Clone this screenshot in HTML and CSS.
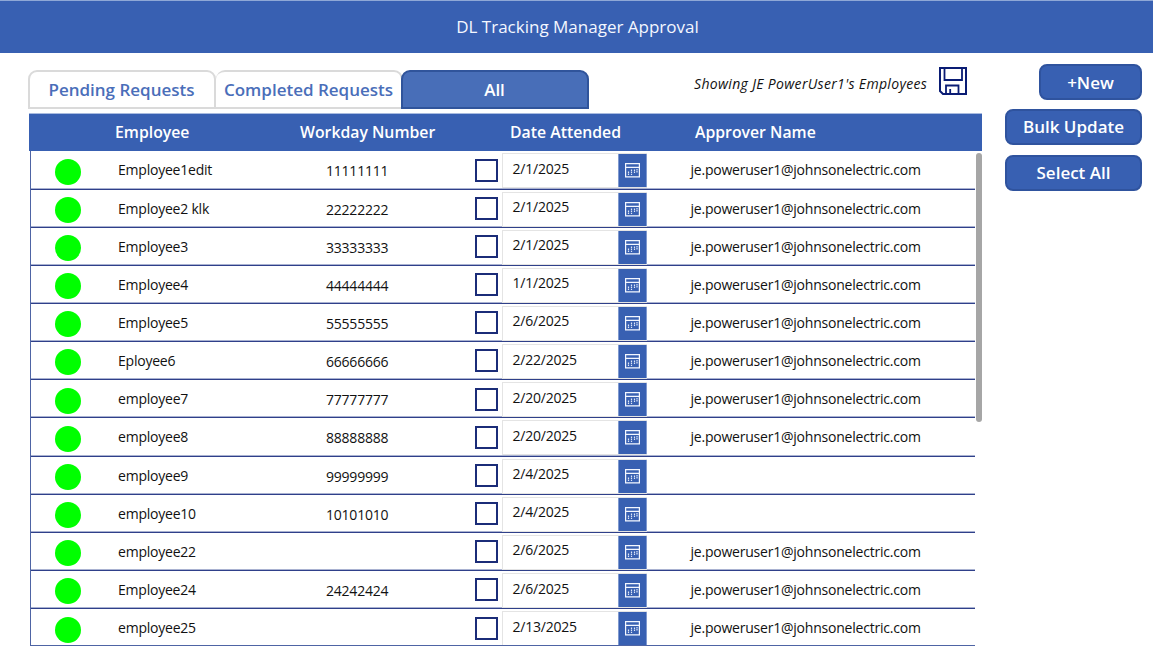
FILE: index.html
```html
<!DOCTYPE html>
<html lang="en">
<head>
<meta charset="utf-8">
<title>DL Tracking Manager Approval</title>
<link rel="stylesheet" href="styles.css">
</head>
<body>
<svg class="defs" aria-hidden="true">
  <symbol id="cal" viewBox="0 0 15 15">
    <path d="M.6 .6H14.4V13.9H.6Z M.6 4.4H14.4" fill="none" stroke="#f4f7ff" stroke-width="1.2"/>
    <path d="M3.5 8.5V12M6.5 6.5V12M9.5 6.5V10.5M12 6V10" fill="none" stroke="#dfe7f8" stroke-width="1.2" stroke-dasharray="1.4 .7"/>
  </symbol>
</svg>
<header class="title"><h1>DL Tracking Manager Approval</h1></header>
<div class="page">
  <main class="main">
    <div class="bar">
      <nav class="tabs">
        <button class="tab">Pending Requests</button>
        <button class="tab">Completed Requests</button>
        <button class="tab active">All</button>
      </nav>
      <span class="showing">Showing JE PowerUser1's Employees</span>
      <svg class="save" viewBox="0 0 28 28" fill="none" stroke="#0a1c74" stroke-width="2">
        <path d="M1 1H27V27H4L1 24Z"/>
        <path d="M5.5 1V13H23V1" stroke-width="1.8"/>
        <path d="M7 27V18.5H19.5V27M11.2 22V27" stroke-width="1.8"/>
      </svg>
    </div>
    <div class="head"><span class="h-name">Employee</span><span class="h-num">Workday Number</span><span class="h-date">Date Attended</span><span class="h-appr">Approver Name</span></div>
    <div class="grid">
      <div class="rows">
        <div class="row"><i class="dot"></i><span class="name">Employee1edit</span><span class="num">11111111</span><i class="check"></i><div class="date"><span>2/1/2025</span><b><svg><use href="#cal"/></svg></b></div><span class="mail">je.poweruser1@johnsonelectric.com</span></div>
        <div class="row"><i class="dot"></i><span class="name">Employee2 klk</span><span class="num">22222222</span><i class="check"></i><div class="date"><span>2/1/2025</span><b><svg><use href="#cal"/></svg></b></div><span class="mail">je.poweruser1@johnsonelectric.com</span></div>
        <div class="row"><i class="dot"></i><span class="name">Employee3</span><span class="num">33333333</span><i class="check"></i><div class="date"><span>2/1/2025</span><b><svg><use href="#cal"/></svg></b></div><span class="mail">je.poweruser1@johnsonelectric.com</span></div>
        <div class="row"><i class="dot"></i><span class="name">Employee4</span><span class="num">44444444</span><i class="check"></i><div class="date"><span>1/1/2025</span><b><svg><use href="#cal"/></svg></b></div><span class="mail">je.poweruser1@johnsonelectric.com</span></div>
        <div class="row"><i class="dot"></i><span class="name">Employee5</span><span class="num">55555555</span><i class="check"></i><div class="date"><span>2/6/2025</span><b><svg><use href="#cal"/></svg></b></div><span class="mail">je.poweruser1@johnsonelectric.com</span></div>
        <div class="row"><i class="dot"></i><span class="name">Eployee6</span><span class="num">66666666</span><i class="check"></i><div class="date"><span>2/22/2025</span><b><svg><use href="#cal"/></svg></b></div><span class="mail">je.poweruser1@johnsonelectric.com</span></div>
        <div class="row"><i class="dot"></i><span class="name">employee7</span><span class="num">77777777</span><i class="check"></i><div class="date"><span>2/20/2025</span><b><svg><use href="#cal"/></svg></b></div><span class="mail">je.poweruser1@johnsonelectric.com</span></div>
        <div class="row"><i class="dot"></i><span class="name">employee8</span><span class="num">88888888</span><i class="check"></i><div class="date"><span>2/20/2025</span><b><svg><use href="#cal"/></svg></b></div><span class="mail">je.poweruser1@johnsonelectric.com</span></div>
        <div class="row"><i class="dot"></i><span class="name">employee9</span><span class="num">99999999</span><i class="check"></i><div class="date"><span>2/4/2025</span><b><svg><use href="#cal"/></svg></b></div><span class="mail"></span></div>
        <div class="row"><i class="dot"></i><span class="name">employee10</span><span class="num">10101010</span><i class="check"></i><div class="date"><span>2/4/2025</span><b><svg><use href="#cal"/></svg></b></div><span class="mail"></span></div>
        <div class="row"><i class="dot"></i><span class="name">employee22</span><span class="num"></span><i class="check"></i><div class="date"><span>2/6/2025</span><b><svg><use href="#cal"/></svg></b></div><span class="mail">je.poweruser1@johnsonelectric.com</span></div>
        <div class="row"><i class="dot"></i><span class="name">Employee24</span><span class="num">24242424</span><i class="check"></i><div class="date"><span>2/6/2025</span><b><svg><use href="#cal"/></svg></b></div><span class="mail">je.poweruser1@johnsonelectric.com</span></div>
        <div class="row last"><i class="dot"></i><span class="name">employee25</span><span class="num"></span><i class="check"></i><div class="date"><span>2/13/2025</span><b><svg><use href="#cal"/></svg></b></div><span class="mail">je.poweruser1@johnsonelectric.com</span></div>
      </div>
      <div class="thumb"></div>
    </div>
  </main>
  <aside class="actions">
    <button class="btn new">+New</button>
    <button class="btn">Bulk Update</button>
    <button class="btn">Select All</button>
  </aside>
</div>
</body>
</html>
```
FILE: styles.css
```css
* { box-sizing: border-box; }
body { margin: 0; height: 646px; overflow: hidden; background: #fff; color: #111; font: 14px "Open Sans", sans-serif; }
button { font: inherit; padding: 0; margin: 0; }
.defs { display: block; width: 0; height: 0; }
.title { height: 53px; background: #3860b2; border-top: 1px solid #8fa8d6; display: flex; align-items: center; justify-content: center; padding-left: 2px; }
.title h1 { margin: 0; font-size: 17px; font-weight: 400; line-height: 24px; color: #f4f7ff; white-space: nowrap; }
.page { display: flex; height: 593px; }
.main { width: 954px; margin-left: 28px; padding-top: 17px; flex: none; }
.bar { display: flex; height: 39px; }
.tabs { display: flex; width: 561px; flex: none; margin-left: -.5px; }
.tab { width: 188px; flex: none; height: 39px; border: 2px solid #dadada; border-radius: 9px 9px 0 0; background: #fff; color: #4a6eb9; font-size: 17px; font-weight: 600; white-space: nowrap; }
.tab + .tab { width: 187px; border-left-width: 0; padding-left: 1px; }
.tab + .tab.active { width: 188px; margin-left: -2px; padding: 0; background: #486eb8; border: 2px solid #30549b; color: #fff; }
.showing { margin-left: 105.5px; width: 245px; flex: none; letter-spacing: .33px; font-style: italic; line-height: 27px; white-space: nowrap; }
.save { width: 28px; height: 28px; margin-top: -3px; flex: none; }
.head { margin: 4px 0 0 1px; height: 38px; width: 953px; background: #3860b2; border-top: 1px solid #a9bbdf; color: #fff; font-size: 15.8px; font-weight: 600; line-height: 36px; display: grid; grid-template-columns: 185px 210px 185px 1fr; padding-left: 86px; white-space: nowrap; }
.grid { display: flex; margin-left: 2px; height: 495px; }
.rows { width: 945px; height: 495px; flex: none; padding-top: .4px; border-left: 1px solid #4e64a4; border-bottom: 1px solid #4e64a4; overflow: hidden; }
.row { height: 38.16px; display: grid; grid-template-columns: 87px 208px 149px 27px 145px 1fr; border-bottom: 1px solid #2f408a; box-shadow: inset 0 -1px #a9b2d1; white-space: nowrap; line-height: 20px; letter-spacing: -.22px; }
.row.last { border-bottom: 0; box-shadow: none; }
.dot { width: 26px; height: 26px; margin: 7.3px 0 0 23.6px; border-radius: 50%; background: #0f0; }
.name { padding-top: 9px; }
.num { padding-top: 10px; }
.check { width: 23px; height: 23px; margin-top: 7.3px; border: 2px solid #1b2c78; }
.date { height: 35px; margin-top: 2px; border: 1px solid #e4e4e4; border-right: 0; display: flex; justify-content: space-between; }
.date span { padding: 4.4px 0 0 9.5px; }
.date b { width: 29px; height: 33px; background: #3860b2; border: 1px solid #7f99cf; border-width: 0 1px; display: flex; align-items: center; justify-content: center; }
.date svg { width: 15px; height: 15px; }
.mail { padding: 9px 0 0 43.5px; }
.thumb { width: 6px; height: 269px; margin: 2px 0 0 1px; border-radius: 3px; background: #a6a6a6; }
.actions { margin: 11px 0 0 23px; width: 137px; display: flex; flex-direction: column; align-items: flex-end; gap: 10px; }
.btn { width: 137px; height: 36px; border: 2px solid #2f539e; border-radius: 8px; background: #3860b2; color: #fff; font-size: 17px; font-weight: 600; padding-bottom: 1px; }
.btn.new { width: 103px; margin-bottom: -1px; padding: 0; }
```
